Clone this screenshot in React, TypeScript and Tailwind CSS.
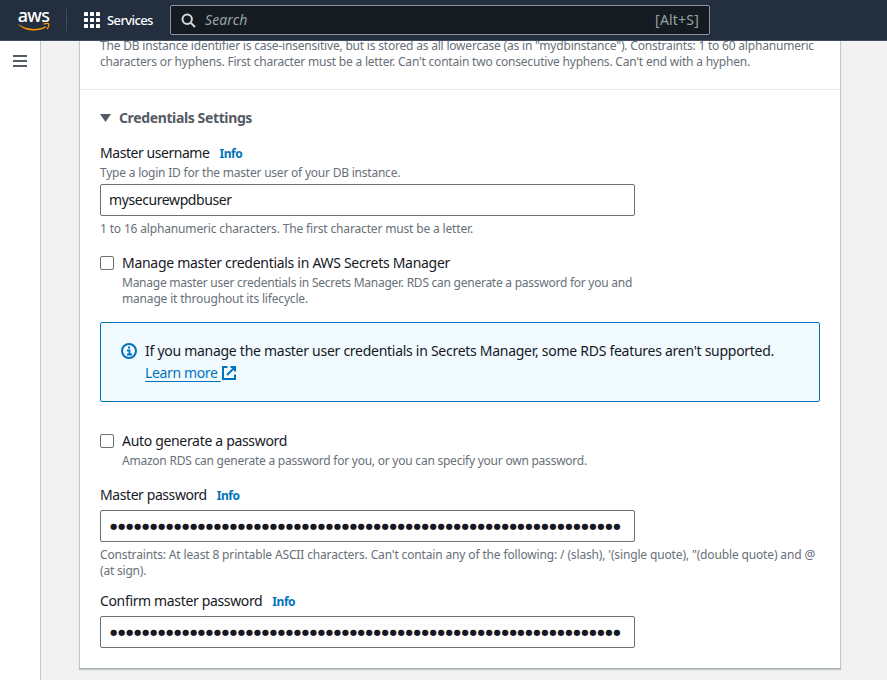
import type { ReactNode } from "react";

const DOTS = "●".repeat(64);

function Info() {
  return (
    <a className="ml-[10px] pt-px text-[12px] font-bold tracking-[-0.45px] text-[#0073bb]">Info</a>
  );
}

function Label({ children, tracking }: { children: ReactNode; tracking: string }) {
  return (
    <div className="flex h-5 items-center whitespace-nowrap text-[14px] leading-5 text-[#16191f]">
      <span className={tracking}>{children}</span>
      <Info />
    </div>
  );
}

function Hint({ children, tracking }: { children: ReactNode; tracking: string }) {
  return (
    <div className={`h-4 whitespace-nowrap text-[12px] leading-4 text-[#687078] ${tracking}`}>
      {children}
    </div>
  );
}

function Field({ children }: { children: ReactNode }) {
  return (
    <div className="flex h-8 w-[535px] items-center rounded-[2px] border border-[#687078] bg-white px-2 text-[14px] text-[#16191f]">
      {children}
    </div>
  );
}

function Dots() {
  return (
    <span className="ml-px whitespace-nowrap font-['DejaVu_Sans',sans-serif] text-[8.4px] leading-4 tracking-[0.68px]">
      {DOTS}
    </span>
  );
}

function Checkbox() {
  return <span className="mt-[3px] h-[14px] w-[14px] shrink-0 rounded-[2px] border border-[#687078] bg-white" />;
}

function AwsLogo() {
  return (
    <div className="flex w-[31px] flex-col items-center">
      <span className="h-[14px] text-[18px] font-medium leading-[10px] tracking-[-0.7px] text-white">aws</span>
      <svg className="-mt-px h-[8px] w-[32px]" viewBox="0 0 32 8" fill="none">
        <path d="M.5 1.2C8 6 18 7.8 27.6 3.3l.7 1C19.5 9.5 7.500 8.500.3 1.700Z" fill="#ff9900" />
        <path d="M25.500 1.300c2-.9 4.500-.9 5.200-.4.500 1-.3 3.700-1.700 5.100" stroke="#ff9900" strokeWidth="1.200" />
      </svg>
    </div>
  );
}

export default function App() {
  return (
    <div className="flex h-[680px] w-[887px] flex-col overflow-hidden bg-[#f2f2f2] font-['Noto_Sans',sans-serif]">
      <header className="flex h-[41px] shrink-0 items-start border-b border-[#414d5c] bg-[#232f3e]">
        <div className="flex h-10 items-center pl-[18px]">
          <AwsLogo />
          <span className="ml-[17px] h-[22px] w-px bg-[#414d5c]" />
          <svg className="ml-[17px] h-4 w-4" viewBox="0 0 16 16" fill="#fff">
            {[0, 6, 12].map((y) =>
              [0, 6, 12].map((x) => <rect key={`${x}-${y}`} x={x} y={y} width="4" height="4" rx=".6" />)
            )}
          </svg>
          <span className="ml-[7px] w-[47px] whitespace-nowrap pt-[2px] text-[13px] font-medium tracking-[-0.6px] text-white">
            Services
          </span>
          <div className="ml-4 flex h-[30px] w-[540px] items-center rounded-[2px] border border-[#879596] bg-[#161b22] pl-[10px] pr-[10px] text-[14px] text-[#95a5a6]">
            <svg className="h-[15px] w-[15px]" viewBox="0 0 15 15" fill="none" stroke="#d5dbdb" strokeWidth="2">
              <circle cx="6.200" cy="6.200" r="4.700" />
              <path d="m9.600 9.600 4.400 4.400" />
            </svg>
            <span className="-mt-px ml-[9px] italic tracking-[0.1px]">Search</span>
            <span className="-mt-px ml-auto tracking-[0.2px]">[Alt+S]</span>
          </div>
        </div>
      </header>

      <div className="flex min-h-0 flex-1">
        <aside className="w-[41px] shrink-0 border-r border-[#c3c8cb] bg-white pl-[13px] pt-[14px]">
          <svg className="h-3 w-[14px]" viewBox="0 0 14 12" fill="#545b64">
            <path d="M0 0h14v2H0zM0 5h14v2H0zM0 10h14v2H0z" />
          </svg>
        </aside>

        <main className="ml-[38px] h-[628px] w-[762px] overflow-hidden border-x border-b border-x-[#c3c8cb] border-b-[#a7b0b5] bg-white shadow-[0_1px_1px_rgba(0,28,36,0.2)]">
          <div className="-mt-[3px] h-[52px] border-b border-[#eaeded] px-5">
            <Hint tracking="tracking-[-0.199px]">
              The DB instance identifier is case-insensitive, but is stored as all lowercase (as in "mydbinstance").
              Constraints: 1 to 60 alphanumeric
            </Hint>
            <Hint tracking="tracking-[-0.2px]">
              characters or hyphens. First character must be a letter. Can't contain two consecutive hyphens. Can't end
              with a hyphen.
            </Hint>
          </div>

          <div className="px-5 pt-[18px]">
            <h2 className="flex h-5 items-center text-[14px] font-bold leading-5 tracking-[-0.375px] text-[#545b64]">
              <svg className="mr-2 h-2 w-[11px]" viewBox="0 0 11 8" fill="#545b64">
                <path d="M0 0h11L5.500 8z" />
              </svg>
              <span className="-mt-px">Credentials Settings</span>
            </h2>

            <div className="mt-[15px]">
              <Label tracking="tracking-[-0.45px]">Master username</Label>
              <div className="mb-[3px] mt-[2px]">
                <Hint tracking="tracking-[-0.22px]">Type a login ID for the master user of your DB instance.</Hint>
              </div>
              <Field>
                <span className="-mt-px tracking-[-0.41px]">mysecurewpdbuser</span>
              </Field>
              <div className="mt-[5px]">
                <Hint tracking="tracking-[-0.158px]">
                  1 to 16 alphanumeric characters. The first character must be a letter.
                </Hint>
              </div>
            </div>

            <div className="mt-4 flex gap-2">
              <Checkbox />
              <div>
                <div className="mb-[2px] h-5 whitespace-nowrap text-[14px] leading-5 tracking-[-0.293px] text-[#16191f]">
                  Manage master credentials in AWS Secrets Manager
                </div>
                <Hint tracking="tracking-[-0.253px]">
                  Manage master user credentials in Secrets Manager. RDS can generate a password for you and
                </Hint>
                <Hint tracking="tracking-[-0.174px]">manage it throughout its lifecycle.</Hint>
              </div>
            </div>

            <div className="mt-[15px] flex h-20 w-[720px] rounded-[2px] border border-[#0073bb] bg-[#f1faff] pl-5 pt-[17px] text-[14px] leading-[22px]">
              <svg className="mt-[3px] h-4 w-4 shrink-0" viewBox="0 0 16 16" fill="none" stroke="#0073bb" strokeWidth="2">
                <circle cx="8" cy="8" r="7" />
                <path d="M6 7.500h2.500v4M6 11.500h5M7 4.500h2" strokeWidth="1.800" />
              </svg>
              <div className="ml-2 whitespace-nowrap text-[#16191f]">
                <div className="tracking-[-0.275px]">
                  If you manage the master user credentials in Secrets Manager, some RDS features aren't supported.
                </div>
                <div className="flex text-[#0073bb]">
                  <span className="w-[77px] whitespace-pre tracking-[-0.36px] underline underline-offset-[3px]">
                    {"Learn more "}
                  </span>
                  <svg className="mt-1 h-[14px] w-[14px]" viewBox="0 0 14 14" fill="none" stroke="#0073bb" strokeWidth="2">
                    <path d="M5.500 1H1v12h12V8.500M8.500 1H13v4.500M13 1 5 9" />
                  </svg>
                </div>
              </div>
            </div>

            <div className="mt-[29px] flex gap-2">
              <Checkbox />
              <div>
                <div className="mb-[2px] h-5 whitespace-nowrap text-[14px] leading-5 tracking-[-0.32px] text-[#16191f]">
                  Auto generate a password
                </div>
                <Hint tracking="tracking-[-0.233px]">
                  Amazon RDS can generate a password for you, or you can specify your own password.
                </Hint>
              </div>
            </div>

            <div className="mt-4">
              <Label tracking="tracking-[-0.42px]">Master password</Label>
              <div className="mb-[5px] mt-[5px]">
                <Field>
                  <Dots />
                </Field>
              </div>
              <Hint tracking="tracking-[-0.146px]">
                Constraints: At least 8 printable ASCII characters. Can't contain any of the following: / (slash), '(single
                quote), "(double quote) and @
              </Hint>
              <Hint tracking="tracking-[-0.2px]">(at sign).</Hint>
            </div>

            <div className="mt-3">
              <Label tracking="tracking-[-0.35px]">Confirm master password</Label>
              <div className="mt-[5px]">
                <Field>
                  <Dots />
                </Field>
              </div>
            </div>
          </div>
        </main>
      </div>
    </div>
  );
}
